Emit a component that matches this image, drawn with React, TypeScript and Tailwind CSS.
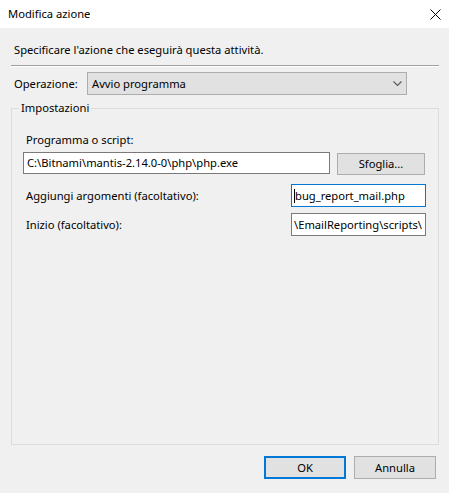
import React from "react";

const font = { fontFamily: '"Noto Sans", "Liberation Sans", sans-serif' };

function Chevron() {
  return (
    <svg width="9" height="6" viewBox="0 0 9 6" aria-hidden="true">
      <path d="M0.5 0.5 L4.5 4.5 L8.5 0.5" fill="none" stroke="#5a5a5a" strokeWidth="1.2" />
    </svg>
  );
}

function CloseIcon() {
  return (
    <svg width="11" height="11" viewBox="0 0 11 11" aria-hidden="true">
      <path d="M0.5 0.5 L10.5 10.5 M10.5 0.5 L0.5 10.5" fill="none" stroke="#000" strokeWidth="1" />
    </svg>
  );
}

export default function App() {
  return (
    <div className="flex h-[493px] w-[449px] flex-col bg-[#f0f0f0] text-[11.2px] leading-[16px] text-black" style={font}>
      {/* title bar */}
      <div className="flex h-[28px] items-center justify-between bg-white pl-[8px] pr-[8px]">
        <span>Modifica azione</span>
        <CloseIcon />
      </div>

      <div className="flex flex-1 flex-col pl-[11px] pr-[10px]">
        <p className="mt-[14px] pl-[3px]">Specificare l'azione che eseguirà questa attività.</p>
        <div className="mt-[7px] h-[2px] border-t border-b border-t-[#a0a0a0] border-b-white" />

        <div className="mt-[5px] flex h-[23px] items-center">
          <span className="w-[76px] pl-[3px]">Operazione:</span>
          <div className="flex h-[23px] w-[320px] items-center justify-between border border-[#adadad] bg-[#e1e1e1] pl-[4px] pr-[4px]">
            <span>Avvio programma</span>
            <Chevron />
          </div>
        </div>

        <fieldset className="mt-[5px] h-[345px] border border-[#dcdcdc]">
          <legend className="ml-[7px] px-[2px]">Impostazioni</legend>
          <div className="mt-[16px] pl-[14px]">Programma o script:</div>
          <div className="mt-[4px] flex items-start pl-[11px]">
            <div className="flex h-[22px] w-[307px] items-center border border-[#7a7a7a] bg-white pl-[3px]">
              C:\Bitnami\mantis-2.14.0-0\php\php.exe
            </div>
            <button type="button" className="ml-[7px] mt-[1px] h-[22px] w-[88px] border border-[#adadad] bg-[#e1e1e1]">
              Sfoglia...
            </button>
          </div>

          <div className="mt-[9px] flex items-center">
            <span className="w-[279px] pl-[14px]">Aggiungi argomenti (facoltativo):</span>
            <div className="flex h-[23px] w-[135px] items-center border border-[#0078d7] bg-white pl-[2px]">
              <span className="h-[14px] w-px bg-black" />
              <span>bug_report_mail.php</span>
            </div>
          </div>

          <div className="mt-[6px] flex items-center">
            <span className="w-[279px] pl-[14px]">Inizio (facoltativo):</span>
            <div className="flex h-[23px] w-[135px] items-center overflow-hidden border border-[#7a7a7a] bg-white pl-[2px] whitespace-nowrap">
              \EmailReporting\scripts\
            </div>
          </div>
        </fieldset>

        <div className="mt-[11px] flex justify-end gap-[8px] pr-[3px]">
          <button type="button" className="h-[23px] w-[82px] border-2 border-[#0078d7] bg-[#e1e1e1]">
            OK
          </button>
          <button type="button" className="h-[23px] w-[82px] border border-[#adadad] bg-[#e1e1e1]">
            Annulla
          </button>
        </div>
      </div>
    </div>
  );
}
